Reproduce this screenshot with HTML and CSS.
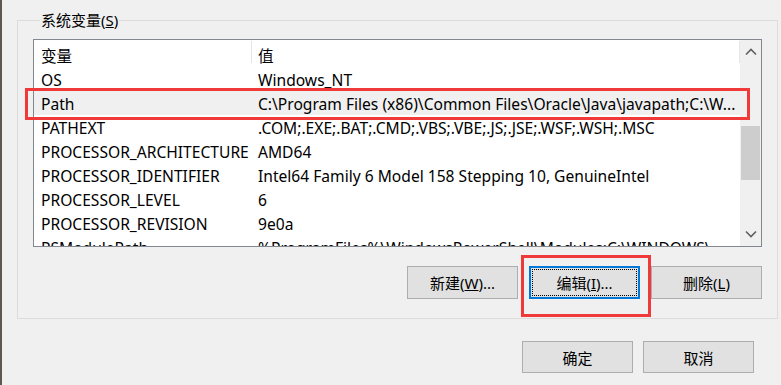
FILE: index.html
```html
<!DOCTYPE html>
<html lang="zh-CN">
<head>
    <meta charset="UTF-8">
    <title>系统变量</title>
    <link rel="stylesheet" href="styles.css">
</head>
<body>
    <div class="page">
        <fieldset class="group">
            <legend class="group-title">系统变量(<u>S</u>)</legend>
            <div class="list">
                <div class="table">
                    <div class="row head">
                        <div class="cell name">变量</div>
                        <div class="cell value">值</div>
                    </div>
                    <div class="row">
                        <div class="cell name">OS</div>
                        <div class="cell value">Windows_NT</div>
                    </div>
                    <div class="row picked">
                        <div class="cell name">Path</div>
                        <div class="cell value">C:\Program Files (x86)\Common Files\Oracle\Java\javapath;C:\W...</div>
                    </div>
                    <div class="row">
                        <div class="cell name">PATHEXT</div>
                        <div class="cell value">.COM;.EXE;.BAT;.CMD;.VBS;.VBE;.JS;.JSE;.WSF;.WSH;.MSC</div>
                    </div>
                    <div class="row">
                        <div class="cell name">PROCESSOR_ARCHITECTURE</div>
                        <div class="cell value">AMD64</div>
                    </div>
                    <div class="row">
                        <div class="cell name">PROCESSOR_IDENTIFIER</div>
                        <div class="cell value">Intel64 Family 6 Model 158 Stepping 10, GenuineIntel</div>
                    </div>
                    <div class="row">
                        <div class="cell name">PROCESSOR_LEVEL</div>
                        <div class="cell value">6</div>
                    </div>
                    <div class="row">
                        <div class="cell name">PROCESSOR_REVISION</div>
                        <div class="cell value">9e0a</div>
                    </div>
                    <div class="row">
                        <div class="cell name">PSModulePath</div>
                        <div class="cell value">%ProgramFiles%\WindowsPowerShell\Modules;C:\WINDOWS\...</div>
                    </div>
                </div>
                <div class="scrollbar">
                    <div class="arrow">
                        <svg width="12" height="8" viewBox="0 0 12 8"><path d="M1 6.5 L6 1.5 L11 6.5" fill="none" stroke="#606060" stroke-width="1.6"/></svg>
                    </div>
                    <div class="track"><div class="thumb"></div></div>
                    <div class="arrow">
                        <svg width="12" height="8" viewBox="0 0 12 8"><path d="M1 1.5 L6 6.5 L11 1.5" fill="none" stroke="#606060" stroke-width="1.6"/></svg>
                    </div>
                </div>
            </div>
            <div class="actions">
                <button class="btn">新建(<u>W</u>)...</button>
                <button class="btn focused"><span>编辑(<u>I</u>)...</span></button>
                <button class="btn">删除(<u>L</u>)</button>
            </div>
        </fieldset>
        <div class="footer">
            <button class="btn">确定</button>
            <button class="btn">取消</button>
        </div>

        <!-- red marks drawn over the dialog -->
        <div class="mark mark-path"></div>
        <div class="mark mark-edit"></div>
    </div>
</body>
</html>
```

FILE: styles.css
```css
body {
    margin: 0;
    background-color: #f0f0f0;
    font-family: "Noto Sans", "Noto Sans CJK SC", sans-serif;
    font-size: 15px;
    color: #000;
}

.page {
    position: relative;
    height: 385px;
    border-left: 2px solid #5f5850;
    box-sizing: border-box;
    overflow: hidden;
}

.group {
    margin: 10px 0 0 15px;
    padding: 0 0 19px 15px;
    width: 761px;
    box-sizing: border-box;
    border: 1px solid #dcdcdc;
    min-width: 0;
}

.group-title {
    margin-left: 7px;
    padding: 0 1px;
    line-height: 20px;
}

.list {
    display: flex;
    margin-top: 9px;
    width: 729px;
    height: 208px;
    box-sizing: border-box;
    border: 1px solid #828790;
    background-color: #fff;
    overflow: hidden;
    font-size: 15.6px;
}

.table {
    flex: 1;
    overflow: hidden;
}

.row {
    display: flex;
    height: 24px;
    line-height: 27px;
    white-space: nowrap;
}

.row.head {
    height: 27px;
    line-height: 32px;
}

.row.picked {
    background-color: #f0f0f0;
}

.cell.name {
    flex: none;
    width: 218px;
    padding-left: 7px;
    box-sizing: border-box;
}

.cell.value {
    flex: 1;
    padding-left: 6px;
}

.head .cell {
    background: linear-gradient(#e5e5e5, #e5e5e5) right 1px / 1px 22px no-repeat;
}

.scrollbar {
    width: 21px;
    display: flex;
    flex-direction: column;
    background-color: #f0f0f0;
}

.arrow {
    height: 24px;
    display: flex;
    align-items: center;
    justify-content: center;
}

.track {
    flex: 1;
    padding: 0 1px;
}

.thumb {
    margin-top: 62px;
    height: 54px;
    background-color: #cdcdcd;
}

.actions {
    display: flex;
    justify-content: flex-end;
    gap: 11px;
    margin-top: 19px;
    width: 729px;
}

.btn {
    width: 111px;
    height: 33px;
    padding: 0;
    font-family: inherit;
    font-size: 15px;
    color: #000;
    background-color: #e1e1e1;
    border: 1px solid #adadad;
}

.btn.focused {
    border: 2px solid #0078d7;
    padding: 1px;
}

.btn.focused span {
    display: flex;
    align-items: center;
    justify-content: center;
    height: 100%;
    border: 1px dotted #000;
    box-sizing: border-box;
}

.footer {
    display: flex;
    gap: 10px;
    margin: 22px 0 0 520px;
}

.footer .btn {
    height: 32px;
}

.mark {
    position: absolute;
    border: 3px solid #f03a3a;
    box-sizing: border-box;
}

.mark-path {
    left: 23px;
    top: 88px;
    width: 725px;
    height: 32px;
}

.mark-edit {
    left: 519px;
    top: 255px;
    width: 130px;
    height: 62px;
}
```
